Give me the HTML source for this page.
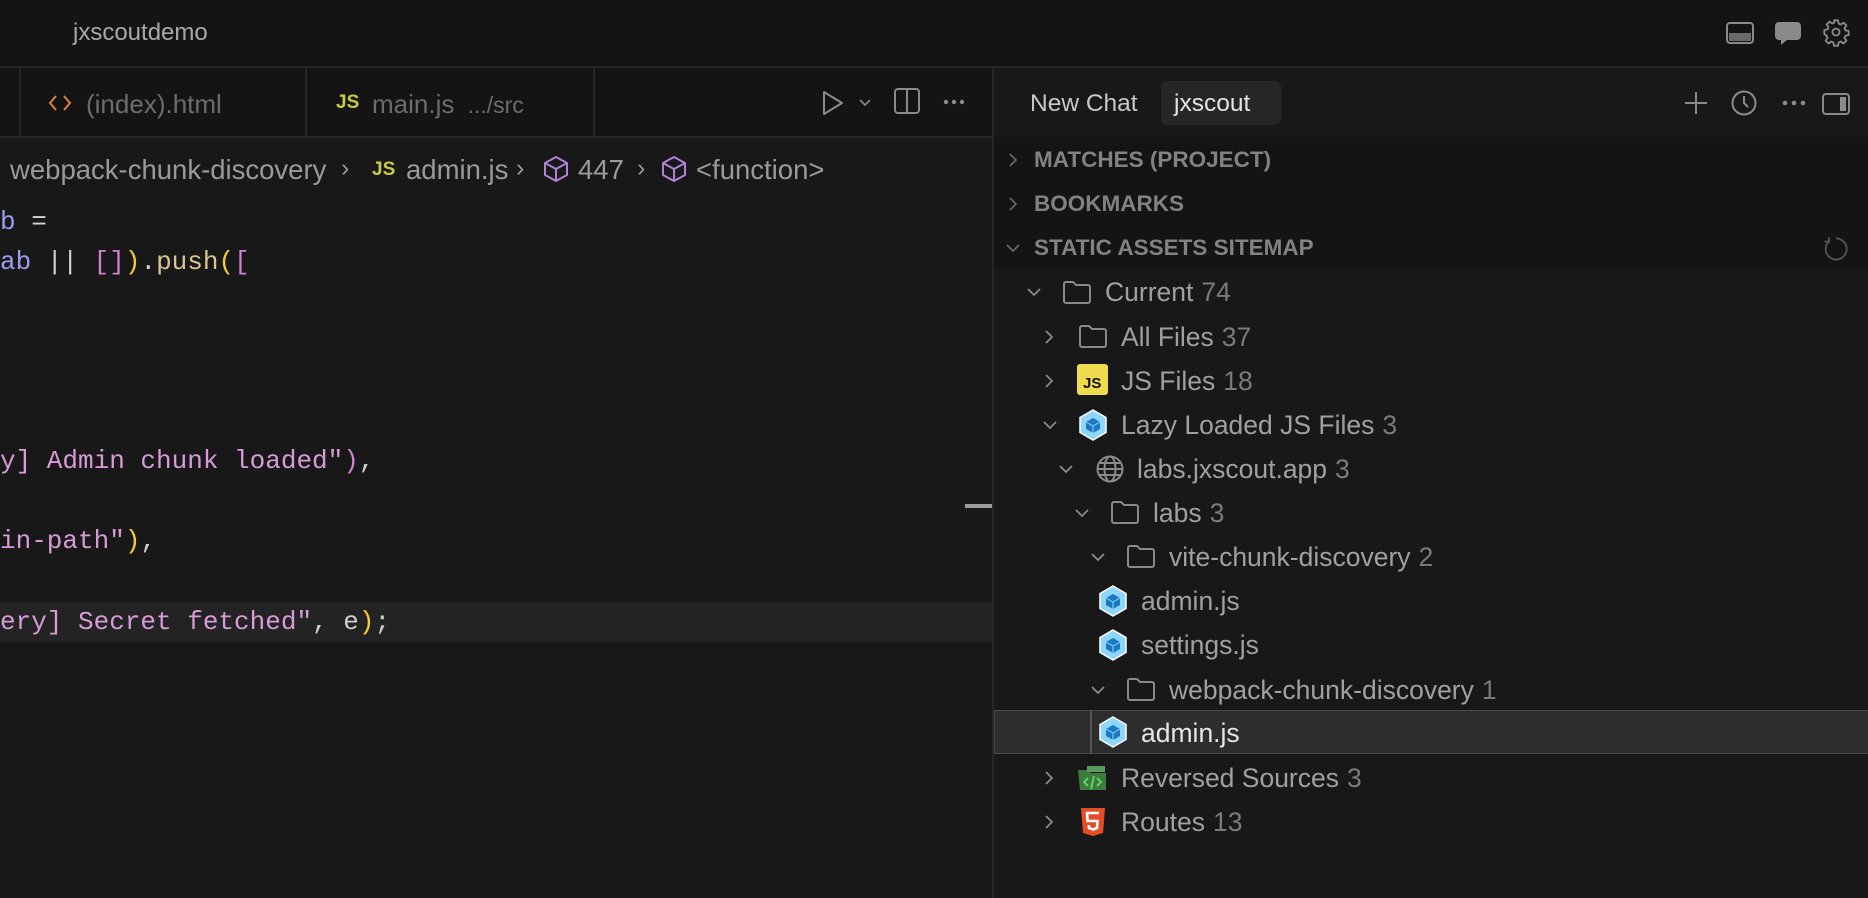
<!DOCTYPE html>
<html><head><meta charset="utf-8">
<style>
*{margin:0;padding:0;box-sizing:border-box}
body{width:1868px;height:898px;background:#181818;font-family:"Liberation Sans",sans-serif;overflow:hidden;position:relative;color:#9a9a9a}
.a{position:absolute}
.t{position:absolute;white-space:nowrap;line-height:1}
.code{position:absolute;left:0;font-family:"Liberation Mono",monospace;font-size:26px;white-space:pre;line-height:40px;height:40px}
.tr{position:absolute;white-space:nowrap;font-size:26.5px;line-height:44px;height:44px;color:#a0a0a0}
.tr .n{color:#7a7a7a;margin-left:8px}
.sh{position:absolute;left:1034px;font-size:22.5px;font-weight:bold;color:#828282;line-height:44px}
svg{position:absolute;overflow:visible}
</style></head><body>
<!-- title bar -->
<div class="a" style="left:0;top:0;width:1868px;height:67px;background:#141414"></div>
<div class="a" style="left:0;top:66px;width:1868px;height:2px;background:#262626"></div>
<div class="t" style="left:73px;top:21px;font-size:24px;color:#a8a8a8">jxscoutdemo</div>
<svg style="left:1726px;top:22px" width="28" height="22"><rect x="1" y="1" width="26" height="20" rx="3" fill="none" stroke="#8a8a8a" stroke-width="2"/><rect x="3" y="11" width="22" height="8" fill="#6a6a6a"/></svg>
<svg style="left:1774px;top:21px" width="28" height="25"><path d="M5 1h18a4 4 0 0 1 4 4v10a4 4 0 0 1-4 4H13l-6 5v-5H5a4 4 0 0 1-4-4V5a4 4 0 0 1 4-4z" fill="#8a8a8a"/></svg>
<svg style="left:1822px;top:18px" width="28" height="28" viewBox="0 0 24 24"><path d="M10.3 2h3.4l.6 2.8 1.8.8 2.4-1.6 2.4 2.4-1.6 2.4.8 1.8 2.8.6v3.4l-2.8.6-.8 1.8 1.6 2.4-2.4 2.4-2.4-1.6-1.8.8-.6 2.8h-3.4l-.6-2.8-1.8-.8-2.4 1.6-2.4-2.4 1.6-2.4-.8-1.8L2 13.7v-3.4l2.8-.6.8-1.8L4 5.5 6.4 3.1 8.8 4.7l1.8-.8z" fill="none" stroke="#8a8a8a" stroke-width="1.6" stroke-linejoin="round"/><circle cx="12" cy="12" r="3" fill="none" stroke="#8a8a8a" stroke-width="1.6"/></svg>

<!-- tab bar left -->
<div class="a" style="left:0;top:68px;width:992px;height:69px;background:#141414"></div>
<div class="a" style="left:0;top:136px;width:992px;height:2px;background:#262626"></div>
<div class="a" style="left:19px;top:68px;width:2px;height:69px;background:#262626"></div>
<div class="a" style="left:305px;top:68px;width:2px;height:69px;background:#262626"></div>
<div class="a" style="left:593px;top:68px;width:2px;height:69px;background:#262626"></div>
<svg style="left:49px;top:95px" width="22" height="16"><path d="M7 1L1 8L7 15M15 1L21 8L15 15" fill="none" stroke="#e0813f" stroke-width="2"/></svg>
<div class="t" style="left:86px;top:91px;font-size:26px;color:#6c6c6c">(index).html</div>
<div class="t" style="left:336px;top:93px;font-size:19px;color:#cbcb41;font-weight:bold">JS</div>
<div class="t" style="left:372px;top:91px;font-size:26px;color:#6c6c6c">main.js <span style="font-size:23px;margin-left:6px">.../src</span></div>
<svg style="left:822px;top:90px" width="22" height="26"><path d="M2 2L20 13L2 24Z" fill="none" stroke="#8a8a8a" stroke-width="2" stroke-linejoin="round"/></svg>
<svg style="left:859px;top:99px" width="12" height="8"><path d="M1 1l5 5 5-5" fill="none" stroke="#8a8a8a" stroke-width="1.6"/></svg>
<svg style="left:894px;top:88px" width="26" height="26"><rect x="1" y="1" width="24" height="24" rx="3" fill="none" stroke="#8a8a8a" stroke-width="2"/><line x1="13" y1="1" x2="13" y2="25" stroke="#8a8a8a" stroke-width="2"/></svg>
<svg style="left:943px;top:99px" width="22" height="6"><circle cx="3" cy="3" r="2.2" fill="#8a8a8a"/><circle cx="11" cy="3" r="2.2" fill="#8a8a8a"/><circle cx="19" cy="3" r="2.2" fill="#8a8a8a"/></svg>

<!-- breadcrumb -->
<div class="t" style="left:10px;top:156px;font-size:27.5px;color:#9a9a9a">webpack-chunk-discovery</div>
<div class="t" style="left:341px;top:156px;font-size:25px;color:#9a9a9a">&rsaquo;</div>
<div class="t" style="left:372px;top:160px;font-size:19px;color:#cbcb41;font-weight:bold">JS</div>
<div class="t" style="left:406px;top:156px;font-size:27.5px;color:#9a9a9a">admin.js</div>
<div class="t" style="left:516px;top:156px;font-size:25px;color:#9a9a9a">&rsaquo;</div>
<svg style="left:543px;top:155px" width="26" height="28" viewBox="0 0 26 28"><path d="M13 2L24 8V20L13 26L2 20V8Z M2 8L13 14L24 8 M13 14V26" fill="none" stroke="#b180d7" stroke-width="2" stroke-linejoin="round"/></svg>
<div class="t" style="left:578px;top:156px;font-size:27.5px;color:#9a9a9a">447</div>
<div class="t" style="left:637px;top:156px;font-size:25px;color:#9a9a9a">&rsaquo;</div>
<svg style="left:661px;top:155px" width="26" height="28" viewBox="0 0 26 28"><path d="M13 2L24 8V20L13 26L2 20V8Z M2 8L13 14L24 8 M13 14V26" fill="none" stroke="#b180d7" stroke-width="2" stroke-linejoin="round"/></svg>
<div class="t" style="left:696px;top:156px;font-size:27.5px;color:#9a9a9a">&lt;function&gt;</div>

<!-- code -->
<div class="code" style="top:202px;color:#d4d4d4"><span style="color:#9c9cf0">b</span> =</div>
<div class="code" style="top:242px;color:#d4d4d4"><span style="color:#9c9cf0">ab</span> || <span style="color:#d17fd1">[]</span><span style="color:#f5cc32">)</span>.<span style="color:#dcc592">push</span><span style="color:#f5cc32">(</span><span style="color:#d17fd1">[</span></div>
<div class="code" style="top:441px;color:#d89bd8">y] Admin chunk loaded"<span style="color:#d17fd1">)</span><span style="color:#cfcfcf">,</span></div>
<div class="code" style="top:521px;color:#d89bd8">in-path"<span style="color:#f5cc32">)</span><span style="color:#cfcfcf">,</span></div>
<div class="a" style="left:0;top:602px;width:992px;height:40px;background:#232323"></div>
<div class="code" style="top:602px;color:#d89bd8">ery] Secret fetched"<span style="color:#cfcfcf">, e</span><span style="color:#f5cc32">)</span><span style="color:#cfcfcf">;</span></div>
<div class="a" style="left:965px;top:504px;width:27px;height:4px;background:#9a9a9a"></div>

<!-- divider -->
<div class="a" style="left:992px;top:68px;width:2px;height:830px;background:#262626"></div>

<!-- right panel header -->
<div class="a" style="left:994px;top:68px;width:874px;height:69px;background:#181818"></div>
<div class="t" style="left:1030px;top:92px;font-size:24.5px;color:#c8c8c8">New Chat</div>
<div class="a" style="left:1161px;top:81px;width:120px;height:44px;border-radius:6px;background:#262626"></div>
<div class="t" style="left:1174px;top:92px;font-size:24.5px;color:#e4e4e4">jxscout</div>
<svg style="left:1685px;top:92px" width="22" height="22"><path d="M11 0V22M0 11H22" stroke="#8a8a8a" stroke-width="2"/></svg>
<svg style="left:1731px;top:90px" width="26" height="26"><circle cx="13" cy="13" r="11.5" fill="none" stroke="#8a8a8a" stroke-width="2"/><path d="M13 6V13L17 17" fill="none" stroke="#8a8a8a" stroke-width="2"/></svg>
<svg style="left:1781px;top:100px" width="28" height="6"><circle cx="4" cy="3" r="2.3" fill="#8a8a8a"/><circle cx="13" cy="3" r="2.3" fill="#8a8a8a"/><circle cx="22" cy="3" r="2.3" fill="#8a8a8a"/></svg>
<svg style="left:1822px;top:93px" width="28" height="22"><rect x="1" y="1" width="26" height="20" rx="3" fill="none" stroke="#8a8a8a" stroke-width="2"/><rect x="18" y="4" width="6" height="14" fill="#8a8a8a"/></svg>

<!-- sections -->
<div class="a" style="left:994px;top:137px;width:874px;height:132px;background:#141414"></div>
<svg style="left:1009px;top:153px" width="8" height="14"><path d="M1 1l6 6-6 6" fill="none" stroke="#6a6a6a" stroke-width="1.6"/></svg>
<div class="sh" style="top:138px">MATCHES (PROJECT)</div>
<svg style="left:1009px;top:197px" width="8" height="14"><path d="M1 1l6 6-6 6" fill="none" stroke="#6a6a6a" stroke-width="1.6"/></svg>
<div class="sh" style="top:182px">BOOKMARKS</div>
<svg style="left:1006px;top:244px" width="14" height="8"><path d="M1 1l6 6 6-6" fill="none" stroke="#6a6a6a" stroke-width="1.6"/></svg>
<div class="sh" style="top:226px">STATIC ASSETS SITEMAP</div>
<svg style="left:1823px;top:237px" width="24" height="24"><path d="M7 3.5A10.5 10.5 0 1 0 13 1.5" fill="none" stroke="#555" stroke-width="1.8"/><path d="M6 0V4.5H1.5" fill="none" stroke="#555" stroke-width="1.8"/></svg>

<!-- selected row -->
<div class="a" style="left:994px;top:710px;width:874px;height:44px;background:#2d2d2d;border-top:1.5px solid #4a4a4a;border-bottom:1.5px solid #4a4a4a;border-left:1.5px solid #4a4a4a"></div>
<div class="a" style="left:1090px;top:710px;width:2px;height:44px;background:#555"></div>

<!-- chevrons -->
<svg style="left:1027px;top:288px" width="14" height="8"><path d="M1 1l6 6 6-6" fill="none" stroke="#8a8a8a" stroke-width="1.8"/></svg>
<svg style="left:1045px;top:330px" width="8" height="14"><path d="M1 1l6 6-6 6" fill="none" stroke="#8a8a8a" stroke-width="1.8"/></svg>
<svg style="left:1045px;top:374px" width="8" height="14"><path d="M1 1l6 6-6 6" fill="none" stroke="#8a8a8a" stroke-width="1.8"/></svg>
<svg style="left:1043px;top:421px" width="14" height="8"><path d="M1 1l6 6 6-6" fill="none" stroke="#8a8a8a" stroke-width="1.8"/></svg>
<svg style="left:1059px;top:465px" width="14" height="8"><path d="M1 1l6 6 6-6" fill="none" stroke="#8a8a8a" stroke-width="1.8"/></svg>
<svg style="left:1075px;top:509px" width="14" height="8"><path d="M1 1l6 6 6-6" fill="none" stroke="#8a8a8a" stroke-width="1.8"/></svg>
<svg style="left:1091px;top:553px" width="14" height="8"><path d="M1 1l6 6 6-6" fill="none" stroke="#8a8a8a" stroke-width="1.8"/></svg>
<svg style="left:1091px;top:686px" width="14" height="8"><path d="M1 1l6 6 6-6" fill="none" stroke="#8a8a8a" stroke-width="1.8"/></svg>
<svg style="left:1045px;top:771px" width="8" height="14"><path d="M1 1l6 6-6 6" fill="none" stroke="#8a8a8a" stroke-width="1.8"/></svg>
<svg style="left:1045px;top:815px" width="8" height="14"><path d="M1 1l6 6-6 6" fill="none" stroke="#8a8a8a" stroke-width="1.8"/></svg>

<!-- folder icons -->
<svg style="left:1062px;top:281px" width="30" height="23"><path d="M2 3a2 2 0 0 1 2-2h7l3 3h12a2 2 0 0 1 2 2v14a2 2 0 0 1-2 2H4a2 2 0 0 1-2-2Z" fill="none" stroke="#8a8a8a" stroke-width="2"/></svg>
<svg style="left:1078px;top:325px" width="30" height="23"><path d="M2 3a2 2 0 0 1 2-2h7l3 3h12a2 2 0 0 1 2 2v14a2 2 0 0 1-2 2H4a2 2 0 0 1-2-2Z" fill="none" stroke="#8a8a8a" stroke-width="2"/></svg>
<svg style="left:1110px;top:501px" width="30" height="23"><path d="M2 3a2 2 0 0 1 2-2h7l3 3h12a2 2 0 0 1 2 2v14a2 2 0 0 1-2 2H4a2 2 0 0 1-2-2Z" fill="none" stroke="#8a8a8a" stroke-width="2"/></svg>
<svg style="left:1126px;top:545px" width="30" height="23"><path d="M2 3a2 2 0 0 1 2-2h7l3 3h12a2 2 0 0 1 2 2v14a2 2 0 0 1-2 2H4a2 2 0 0 1-2-2Z" fill="none" stroke="#8a8a8a" stroke-width="2"/></svg>
<svg style="left:1126px;top:678px" width="30" height="23"><path d="M2 3a2 2 0 0 1 2-2h7l3 3h12a2 2 0 0 1 2 2v14a2 2 0 0 1-2 2H4a2 2 0 0 1-2-2Z" fill="none" stroke="#8a8a8a" stroke-width="2"/></svg>

<!-- JS icon -->
<div class="a" style="left:1077px;top:364px;width:31px;height:31px;background:#f0db4f;border-radius:3px"></div>
<div class="t" style="left:1083px;top:376px;font-size:15px;font-weight:bold;color:#111">JS</div>

<!-- webpack icons -->
<svg style="left:1078px;top:409px" width="30" height="32" viewBox="0 0 30 32"><path d="M15 1L28 8.5V23.5L15 31L2 23.5V8.5Z" fill="#8ed6fb" stroke="#fff" stroke-width="1.5"/><path d="M15 9L22 13V20L15 24L8 20V13Z" fill="#1c78c0"/><path d="M8 13L15 17L22 13M15 17V24" fill="none" stroke="#8ed6fb" stroke-width="1"/></svg>
<svg style="left:1098px;top:585px" width="30" height="32" viewBox="0 0 30 32"><path d="M15 1L28 8.5V23.5L15 31L2 23.5V8.5Z" fill="#8ed6fb" stroke="#fff" stroke-width="1.5"/><path d="M15 9L22 13V20L15 24L8 20V13Z" fill="#1c78c0"/><path d="M8 13L15 17L22 13M15 17V24" fill="none" stroke="#8ed6fb" stroke-width="1"/></svg>
<svg style="left:1098px;top:629px" width="30" height="32" viewBox="0 0 30 32"><path d="M15 1L28 8.5V23.5L15 31L2 23.5V8.5Z" fill="#8ed6fb" stroke="#fff" stroke-width="1.5"/><path d="M15 9L22 13V20L15 24L8 20V13Z" fill="#1c78c0"/><path d="M8 13L15 17L22 13M15 17V24" fill="none" stroke="#8ed6fb" stroke-width="1"/></svg>
<svg style="left:1098px;top:716px" width="30" height="32" viewBox="0 0 30 32"><path d="M15 1L28 8.5V23.5L15 31L2 23.5V8.5Z" fill="#8ed6fb" stroke="#fff" stroke-width="1.5"/><path d="M15 9L22 13V20L15 24L8 20V13Z" fill="#1c78c0"/><path d="M8 13L15 17L22 13M15 17V24" fill="none" stroke="#8ed6fb" stroke-width="1"/></svg>

<!-- globe -->
<svg style="left:1096px;top:455px" width="28" height="28" viewBox="0 0 28 28"><circle cx="14" cy="14" r="12.5" fill="none" stroke="#8a8a8a" stroke-width="2"/><ellipse cx="14" cy="14" rx="5.5" ry="12.5" fill="none" stroke="#8a8a8a" stroke-width="2"/><path d="M1.5 14H26.5M3.5 8H24.5M3.5 20H24.5" stroke="#8a8a8a" stroke-width="2"/></svg>

<!-- reversed sources -->
<svg style="left:1077px;top:764px" width="31" height="28" viewBox="0 0 31 28"><path d="M1 6h10l3 3h15v17H3Z" fill="#3d7a3d"/><path d="M10 2h18v6H10z" fill="#5a9a5a"/><path d="M11 14l-4 4 4 4M20 14l4 4-4 4M17 12l-3 13" fill="none" stroke="#5fd35f" stroke-width="2"/></svg>
<!-- html5 -->
<svg style="left:1080px;top:807px" width="26" height="30" viewBox="0 0 26 30"><path d="M1 1H25L23 26L13 29L3 26Z" fill="#e44d26"/><path d="M19 6H7L7.6 14H17.5L17 21L13 22.5L9 21L8.8 18" fill="none" stroke="#fff" stroke-width="2.6"/></svg>

<!-- tree labels -->
<div class="tr" style="left:1105px;top:270px">Current<span class="n">74</span></div>
<div class="tr" style="left:1121px;top:315px">All Files<span class="n">37</span></div>
<div class="tr" style="left:1121px;top:359px">JS Files<span class="n">18</span></div>
<div class="tr" style="left:1121px;top:403px">Lazy Loaded JS Files<span class="n">3</span></div>
<div class="tr" style="left:1137px;top:447px">labs.jxscout.app<span class="n">3</span></div>
<div class="tr" style="left:1153px;top:491px">labs<span class="n">3</span></div>
<div class="tr" style="left:1169px;top:535px">vite-chunk-discovery<span class="n">2</span></div>
<div class="tr" style="left:1141px;top:579px">admin.js</div>
<div class="tr" style="left:1141px;top:623px">settings.js</div>
<div class="tr" style="left:1169px;top:668px">webpack-chunk-discovery<span class="n">1</span></div>
<div class="tr" style="left:1141px;top:711px;color:#e6e6e6">admin.js</div>
<div class="tr" style="left:1121px;top:756px">Reversed Sources<span class="n">3</span></div>
<div class="tr" style="left:1121px;top:800px">Routes<span class="n">13</span></div>
</body></html>
